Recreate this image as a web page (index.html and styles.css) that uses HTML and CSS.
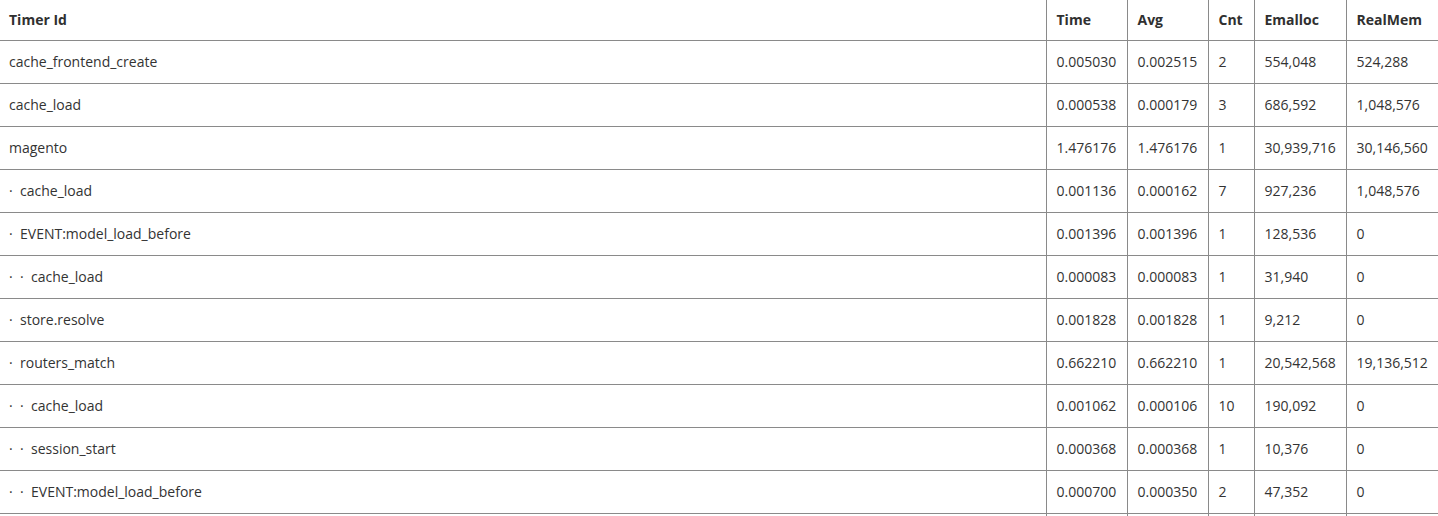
FILE: index.html
```html
<!DOCTYPE html>
<html lang="en">
<head>
    <meta charset="UTF-8">
    <meta name="viewport" content="width=device-width, initial-scale=1.0">
    <title>Profiler</title>
    <link rel="stylesheet" href="styles.css">
</head>
<body>
    <table class="profiler">
        <colgroup>
            <col class="col-id">
            <col class="col-time">
            <col class="col-avg">
            <col class="col-cnt">
            <col class="col-emalloc">
            <col class="col-realmem">
        </colgroup>
        <thead>
            <tr>
                <th>Timer Id</th>
                <th>Time</th>
                <th>Avg</th>
                <th>Cnt</th>
                <th>Emalloc</th>
                <th>RealMem</th>
            </tr>
        </thead>
        <tbody>
            <tr><td>cache_frontend_create</td><td>0.005030</td><td>0.002515</td><td>2</td><td>554,048</td><td>524,288</td></tr>
            <tr><td>cache_load</td><td>0.000538</td><td>0.000179</td><td>3</td><td>686,592</td><td>1,048,576</td></tr>
            <tr><td>magento</td><td>1.476176</td><td>1.476176</td><td>1</td><td>30,939,716</td><td>30,146,560</td></tr>
            <tr><td><span class="dot">&middot;</span>cache_load</td><td>0.001136</td><td>0.000162</td><td>7</td><td>927,236</td><td>1,048,576</td></tr>
            <tr><td><span class="dot">&middot;</span>EVENT:model_load_before</td><td>0.001396</td><td>0.001396</td><td>1</td><td>128,536</td><td>0</td></tr>
            <tr><td><span class="dot">&middot;</span><span class="dot">&middot;</span>cache_load</td><td>0.000083</td><td>0.000083</td><td>1</td><td>31,940</td><td>0</td></tr>
            <tr><td><span class="dot">&middot;</span>store.resolve</td><td>0.001828</td><td>0.001828</td><td>1</td><td>9,212</td><td>0</td></tr>
            <tr><td><span class="dot">&middot;</span>routers_match</td><td>0.662210</td><td>0.662210</td><td>1</td><td>20,542,568</td><td>19,136,512</td></tr>
            <tr><td><span class="dot">&middot;</span><span class="dot">&middot;</span>cache_load</td><td>0.001062</td><td>0.000106</td><td>10</td><td>190,092</td><td>0</td></tr>
            <tr><td><span class="dot">&middot;</span><span class="dot">&middot;</span>session_start</td><td>0.000368</td><td>0.000368</td><td>1</td><td>10,376</td><td>0</td></tr>
            <tr><td><span class="dot">&middot;</span><span class="dot">&middot;</span>EVENT:model_load_before</td><td>0.000700</td><td>0.000350</td><td>2</td><td>47,352</td><td>0</td></tr>
            <tr class="more"><td></td><td></td><td></td><td></td><td></td><td></td></tr>
        </tbody>
    </table>
</body>
</html>
```

FILE: styles.css
```css
body {
    margin: 0;
    padding: 0;
    background: #fff;
    color: #333;
    font-family: 'Open Sans', sans-serif;
    font-size: 14px;
    overflow: hidden;
}

.profiler {
    width: 1438px;
    border-collapse: collapse;
    table-layout: fixed;
}

.col-id { width: 1046px; }
.col-time { width: 81px; }
.col-avg { width: 81px; }
.col-cnt { width: 46px; }
.col-emalloc { width: 92px; }
.col-realmem { width: 92px; }

.profiler th,
.profiler td {
    border: 1px solid #8a8a8a;
    padding: 0 10px;
    text-align: left;
    white-space: nowrap;
    line-height: 20px;
}

.profiler th {
    font-weight: 700;
    height: 40px;
    border-top: none;
    color: #303030;
}

.profiler td {
    height: 42px;
}

.profiler tr > :first-child {
    border-left: none;
    padding-left: 9px;
}

.profiler tr > :last-child {
    border-right: none;
}

/* indentation marker for nested timers */
.dot {
    display: inline-block;
    width: 11px;
}
```
